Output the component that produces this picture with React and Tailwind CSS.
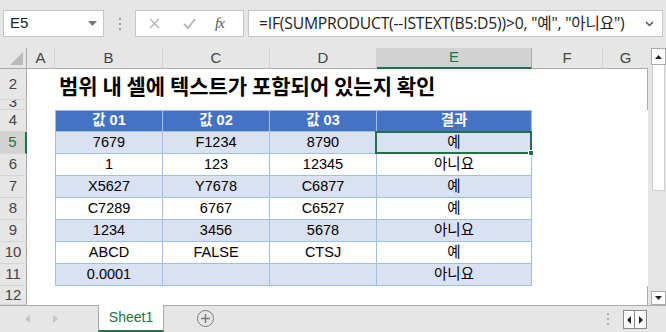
import React from "react";

const COLS = [
    { key: "A", w: "w-[28px]" },
    { key: "B", w: "w-[108px]" },
    { key: "C", w: "w-[107px]" },
    { key: "D", w: "w-[107px]" },
    { key: "E", w: "w-[155px]" },
    { key: "F", w: "w-[71px]" },
    { key: "G", w: "w-[45px]" },
];

const DATA = [
    ["7679", "F1234", "8790", "예"],
    ["1", "123", "12345", "아니요"],
    ["X5627", "Y7678", "C6877", "예"],
    ["C7289", "6767", "C6527", "예"],
    ["1234", "3456", "5678", "아니요"],
    ["ABCD", "FALSE", "CTSJ", "예"],
    ["0.0001", "", "", "아니요"],
];

const font = "font-['Liberation_Sans','Noto_Sans_CJK_KR',sans-serif]";

function RowHead({ n, h, active }) {
    return (
        <div
            className={`w-[27px] ${h} shrink-0 flex items-center justify-center text-[15px] border-b border-[#d4d4d4] ${
                active
                    ? "bg-[#d2d2d2] text-[#217346] border-r-2 border-r-[#217346]"
                    : "bg-[#e6e6e6] text-[#444] border-r border-r-[#ababab]"
            }`}
        >
            {n}
        </div>
    );
}

function Blank({ w, h }) {
    return <div className={`${w} ${h} shrink-0 bg-white`} />;
}

function TableRow({ n, cells, header, banded }) {
    const base = "h-[22px] shrink-0 flex items-center justify-center text-[14.5px] border-r border-b border-[#9bc2e6]";
    const fill = header
        ? "bg-[#4472c4] text-white font-bold"
        : banded
          ? "bg-[#d9e1f2] text-black"
          : "bg-white text-black";
    return (
        <div className="flex">
            <RowHead n={n} h="h-[22px]" active={n === 5} />
            <Blank w="w-[28px]" h="h-[22px]" />
            {cells.map((c, i) => (
                <div
                    key={i}
                    className={`${COLS[i + 1].w} ${base} ${fill} ${i === 0 ? "border-l" : ""} ${
                        header ? "border-t" : ""
                    } ${n === 5 && i === 3 ? "relative" : ""}`}
                >
                    {c}
                    {n === 5 && i === 3 && (
                        <div className="absolute -left-[2px] -top-[1px] -right-[1px] -bottom-[1px] border-2 border-[#217346]">
                            <div className="absolute -right-[4px] -bottom-[4px] w-[6px] h-[6px] bg-[#217346] border border-white" />
                        </div>
                    )}
                </div>
            ))}
            <Blank w="w-[71px]" h="h-[22px]" />
            <Blank w="w-[45px]" h="h-[22px]" />
        </div>
    );
}

export default function App() {
    return (
        <div className={`w-[666px] h-[332px] overflow-hidden bg-[#e6e6e6] flex flex-col ${font}`}>
            {/* formula bar */}
            <div className="h-[48px] shrink-0 flex items-start pt-[10px]">
                <div className="ml-[3px] w-[101px] h-[27px] bg-white border border-[#c6c6c6] flex items-center justify-between pl-[6px] pr-[6px] text-[15px] text-[#222]">
                    <span>E5</span>
                    <svg width="9" height="5" viewBox="0 0 9 5">
                        <path d="M0 0h9L4.5 5z" fill="#777" />
                    </svg>
                </div>
                <div className="w-[31px] h-[27px] flex flex-col items-center justify-center gap-[3px]">
                    <span className="w-[2px] h-[2px] bg-[#9a9a9a]" />
                    <span className="w-[2px] h-[2px] bg-[#9a9a9a]" />
                    <span className="w-[2px] h-[2px] bg-[#9a9a9a]" />
                </div>
                <div className="w-[109px] h-[27px] bg-white border border-[#c6c6c6] flex items-center">
                    <svg className="ml-[13px]" width="11" height="11" viewBox="0 0 11 11">
                        <path d="M1 1l9 9M10 1l-9 9" stroke="#b5b5b5" strokeWidth="1.4" />
                    </svg>
                    <svg className="ml-[23px]" width="13" height="11" viewBox="0 0 13 11">
                        <path d="M1 6l4 4 7-9" stroke="#b5b5b5" strokeWidth="1.8" fill="none" />
                    </svg>
                    <span className="ml-[19px] text-[15px] italic text-[#555] font-['Liberation_Serif',serif] tracking-[-1px]">
                        fx
                    </span>
                </div>
                <div className="ml-[4px] w-[415px] h-[27px] bg-white border border-[#c6c6c6] flex items-center justify-between pl-[10px] pr-[8px] text-[15.7px] text-[#222] font-['Open_Sans','Noto_Sans_CJK_KR',sans-serif] tracking-[-0.2px]">
                    <span className="whitespace-nowrap">=IF(SUMPRODUCT(--ISTEXT(B5:D5))&gt;0, "예", "아니요")</span>
                    <svg width="9" height="6" viewBox="0 0 9 6">
                        <path d="M1 1l3.5 3.5L8 1" stroke="#555" strokeWidth="1.5" fill="none" />
                    </svg>
                </div>
            </div>

            {/* sheet */}
            <div className="h-[257px] shrink-0 flex">
                <div className="w-[651px] shrink-0 flex flex-col">
                    <div className="w-[648px] border-r border-[#ababab] flex flex-col">
                        {/* column header */}
                        <div className="flex h-[21px]">
                            <div className="w-[27px] h-[21px] shrink-0 relative border-r border-b border-[#ababab] bg-[#e6e6e6]">
                                <svg className="absolute right-[3px] bottom-[3px]" width="13" height="13" viewBox="0 0 13 13">
                                    <path d="M13 0v13H0z" fill="#b9b9b9" />
                                </svg>
                            </div>
                            {COLS.map((c) => (
                                <div
                                    key={c.key}
                                    className={`${c.w} h-[21px] shrink-0 flex items-center justify-center text-[15px] ${
                                        c.key === "E"
                                            ? "bg-[#d2d2d2] text-[#217346] border-b-2 border-[#217346] border-r border-r-[#ababab]"
                                            : "bg-[#e6e6e6] text-[#444] border-b border-[#ababab] border-r border-r-[#d4d4d4]"
                                    } ${c.key === "G" ? "border-r-0" : ""}`}
                                >
                                    {c.key}
                                </div>
                            ))}
                        </div>
                        {/* row 2 title */}
                        <div className="flex">
                            <RowHead n={2} h="h-[31px]" />
                            <div className="flex-1 h-[31px] bg-white flex items-center pl-[32px] pt-[2px] text-[21px] font-bold text-black whitespace-nowrap font-['Noto_Sans_CJK_KR',sans-serif]">
                                범위 내 셀에 텍스트가 포함되어 있는지 확인
                            </div>
                        </div>
                        {/* row 3 */}
                        <div className="flex">
                            <div className="w-[27px] h-[10px] shrink-0 bg-[#e6e6e6] border-r border-[#ababab] border-b border-b-[#d4d4d4] overflow-hidden flex justify-center">
                                <span className="text-[15px] leading-[10px] text-[#444] -mt-[3px]">3</span>
                            </div>
                            <div className="flex-1 h-[10px] bg-white" />
                        </div>
                        <TableRow n={4} cells={["값 01", "값 02", "값 03", "결과"]} header />
                        {DATA.map((r, i) => (
                            <TableRow key={i} n={5 + i} cells={r} banded={i % 2 === 0} />
                        ))}
                        <div className="flex">
                            <RowHead n={12} h="h-[19px]" />
                            <div className="flex-1 h-[19px] bg-white" />
                        </div>
                    </div>
                </div>
                {/* vertical scrollbar */}
                <div className="w-[15px] shrink-0 flex flex-col bg-[#e6e6e6]">
                    <div className="h-[17px] bg-white border border-[#ababab] flex items-center justify-center">
                        <svg width="7" height="4" viewBox="0 0 7 4">
                            <path d="M0 4h7L3.5 0z" fill="#222" />
                        </svg>
                    </div>
                    <div className="h-[126px] bg-white border-x border-b border-[#cfcfcf] mx-[1px]" />
                    <div className="flex-1" />
                    <div className="h-[14px] bg-white border border-[#ababab] flex items-center justify-center">
                        <svg width="7" height="4" viewBox="0 0 7 4">
                            <path d="M0 0h7L3.5 4z" fill="#222" />
                        </svg>
                    </div>
                </div>
            </div>

            {/* tab bar */}
            <div className="h-[27px] shrink-0 flex items-start border-t border-[#ababab]">
                <div className="w-[98px] h-[26px] flex items-center">
                    <svg className="ml-[25px]" width="5" height="8" viewBox="0 0 5 8">
                        <path d="M5 0v8L0 4z" fill="#c4c4c4" />
                    </svg>
                    <svg className="ml-[23px]" width="5" height="8" viewBox="0 0 5 8">
                        <path d="M0 0v8l5-4z" fill="#c4c4c4" />
                    </svg>
                </div>
                <div className="-mt-[1px] w-[66px] h-[27px] bg-white border-x border-[#ababab] border-b-2 border-b-[#217346] flex items-center justify-center text-[14px] text-[#217346]">
                    Sheet1
                </div>
                <div className="ml-[33px] mt-[4px] w-[17px] h-[17px] rounded-full border-[1.5px] border-[#7a7a7a] flex items-center justify-center">
                    <svg width="9" height="9" viewBox="0 0 9 9">
                        <path d="M4.5 0v9M0 4.5h9" stroke="#7a7a7a" strokeWidth="1.5" />
                    </svg>
                </div>
                <div className="flex-1" />
                <div className="mt-[7px] mr-[14px] flex flex-col gap-[3px]">
                    <span className="w-[2px] h-[2px] bg-[#b0b0b0]" />
                    <span className="w-[2px] h-[2px] bg-[#b0b0b0]" />
                    <span className="w-[2px] h-[2px] bg-[#b0b0b0]" />
                </div>
                <div className="mt-[4px] mr-[19px] flex border border-[#8a8a8a] bg-white">
                    <div className="w-[11px] h-[17px] flex items-center justify-center border-r border-[#8a8a8a]">
                        <svg width="4" height="8" viewBox="0 0 4 8">
                            <path d="M4 0v8L0 4z" fill="#222" />
                        </svg>
                    </div>
                    <div className="w-[11px] h-[17px] flex items-center justify-center">
                        <svg width="4" height="8" viewBox="0 0 4 8">
                            <path d="M0 0v8l4-4z" fill="#222" />
                        </svg>
                    </div>
                </div>
            </div>
        </div>
    );
}
